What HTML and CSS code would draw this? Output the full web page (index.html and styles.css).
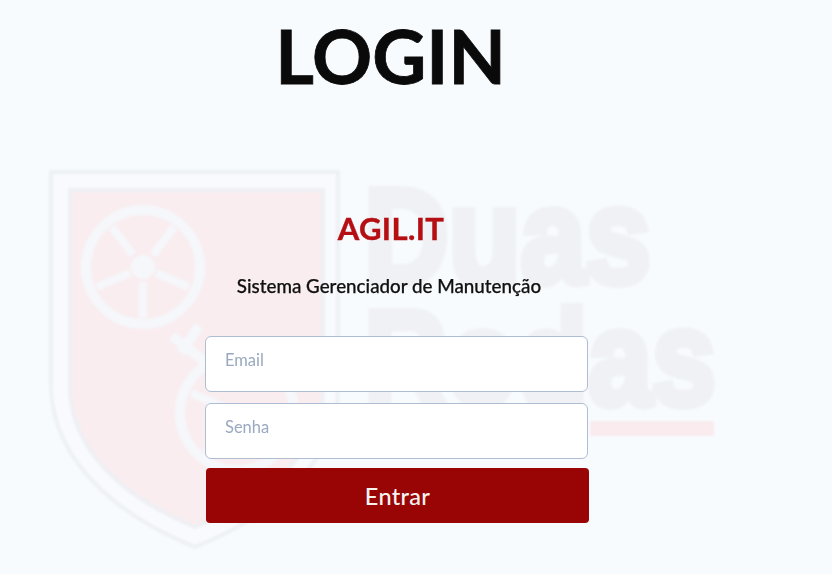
FILE: index.html
```html
<!DOCTYPE html>
<html lang="pt-BR">
  <head>
    <meta charset="UTF-8" />
    <meta name="viewport" content="width=device-width, initial-scale=1.0" />
    <title>Login</title>
    <link rel="stylesheet" href="styles.css">
  </head>
  <body>
    <!-- marca d'agua -->
    <svg class="watermark" width="832" height="574" viewBox="0 0 832 574">
      <path class="shield-edge" d="M51 172H338V390C338 460 275 515 195 547C115 515 54 460 51 390Z" />
      <path class="shield-fill" d="M70 190H323V390C323 450 270 497 195 527C122 497 72 450 70 390Z" />
      <g class="wheel">
        <circle class="rim" cx="143" cy="267" r="57" />
        <path d="M112 227L133 255M174 227L153 255M97 287L130 273M189 287L156 273M143 282V318" />
        <path class="rim" d="M172 336L208 364M199 326L181 353" />
        <circle class="rim" cx="237" cy="413" r="57" />
        <path d="M206 453L227 425M191 393L224 407" />
      </g>
      <circle class="hub" cx="143" cy="267" r="12" />
      <text class="brand" x="364" y="283" textLength="287" lengthAdjust="spacingAndGlyphs">Duas</text>
      <text class="brand" x="364" y="405" textLength="352" lengthAdjust="spacingAndGlyphs">Rodas</text>
      <rect class="brand-line" x="590" y="421" width="124" height="15" />
    </svg>

    <div class="container">
      <h1 class="title">LOGIN</h1>
      <h2 class="brand-name">AGIL.IT</h2>
      <p class="subtitle">Sistema Gerenciador de Manutenção</p>
      <form class="login-form" action="#">
        <input type="text" placeholder="Email" name="email" />
        <input type="password" placeholder="Senha" name="senha" />
        <button type="submit">Entrar</button>
      </form>
    </div>
  </body>
</html>
```

FILE: styles.css
```css
* {
  box-sizing: border-box;
}

html,
body {
  height: 100%;
}

body {
  margin: 0;
  background-color: #f8fbfe;
  font-family: Lato, "Open Sans", sans-serif;
  overflow: hidden;
}

.watermark {
  position: absolute;
  top: 0;
  left: 0;
  filter: blur(1px);
}

.shield-edge {
  fill: #f8fafd;
  stroke: #eef1f4;
  stroke-width: 4;
}

.shield-fill {
  fill: #f9edf0;
  stroke: #eef0f3;
  stroke-width: 4;
}

.wheel {
  fill: none;
  stroke: #f5f7fa;
  stroke-width: 8;
}

.wheel .rim {
  stroke-width: 10;
}

.hub {
  fill: #f5f7fa;
}

.brand {
  fill: #eff1f4;
  font-family: "Liberation Sans", Arial, sans-serif;
  font-size: 136px;
  font-weight: bold;
  stroke: #eff1f4;
  stroke-width: 8;
}

.brand-line {
  fill: #f9ebee;
}

.container {
  position: relative;
  width: 832px;
  padding: 9px 0 0 205px;
  filter: blur(0.4px);
}

.title {
  width: 371px;
  margin: 0;
  color: #0a0a0a;
  font-size: 74.5px;
  font-weight: 700;
  line-height: 92px;
  text-align: center;
  -webkit-text-stroke: 0.8px #0a0a0a;
}

.brand-name {
  width: 372px;
  margin: 107px 0 0;
  color: #b50f14;
  font-size: 31px;
  font-weight: 700;
  letter-spacing: 0.4px;
  line-height: 40px;
  text-align: center;
  -webkit-text-stroke: 0.4px #b50f14;
}

.subtitle {
  width: 368px;
  margin: 26px 0 0;
  color: #111;
  font-size: 18.8px;
  font-weight: 500;
  line-height: 24px;
  text-align: center;
  -webkit-text-stroke: 0.25px #111;
}

.login-form {
  display: flex;
  flex-direction: column;
  width: 384px;
  margin-top: 38px;
}

.login-form input {
  width: 383px;
  height: 56px;
  margin-bottom: 11px;
  padding: 0 19px 8px;
  border: 1.5px solid #aebdd2;
  border-radius: 6px;
  background: #fff;
  font-family: inherit;
  font-size: 16.5px;
  outline: none;
}

.login-form input::placeholder {
  color: #9aa9bf;
  opacity: 1;
}

.login-form button {
  width: 383px;
  height: 55px;
  margin: -2px 0 0 1px;
  border: none;
  border-radius: 4px;
  background-color: #990404;
  color: #f7f2f2;
  font-family: inherit;
  font-size: 23.5px;
  font-weight: 500;
  letter-spacing: 0.3px;
  cursor: pointer;
}
```
